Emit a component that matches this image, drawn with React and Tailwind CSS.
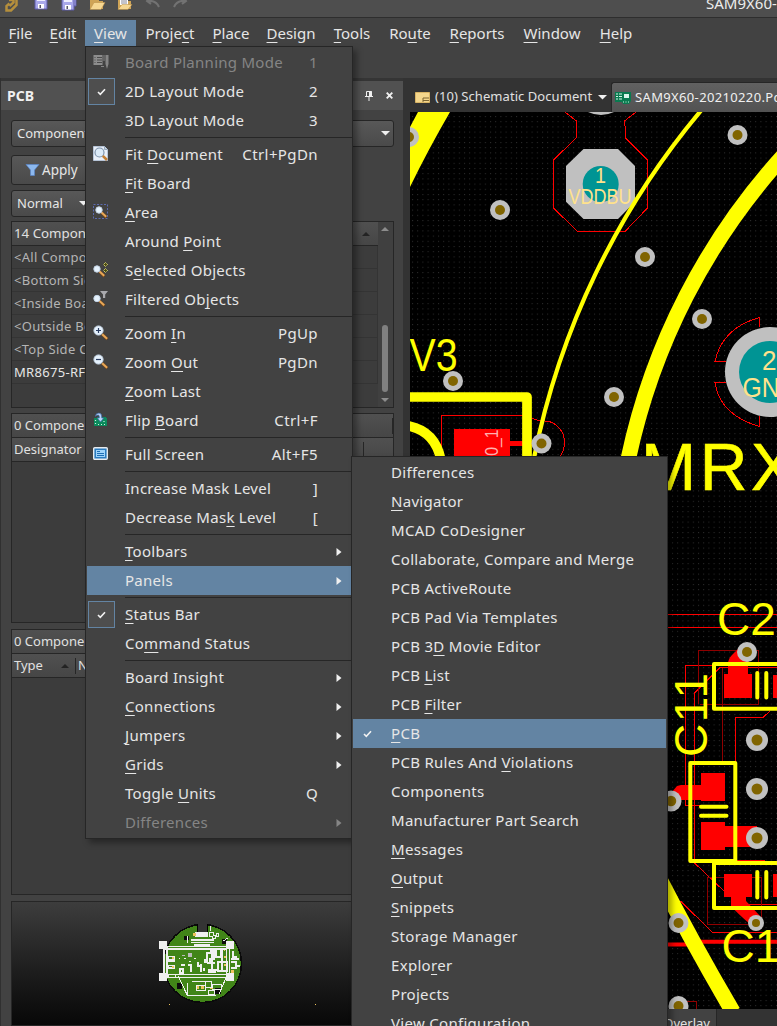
import React from 'react';

const FONT = "font-['Noto_Sans','Open_Sans',sans-serif]";

function Label({ text }) {
  const i = text.indexOf('&');
  if (i < 0) return <>{text}</>;
  return (
    <>
      {text.slice(0, i)}
      <span className="underline decoration-1 underline-offset-[3px] [text-decoration-skip-ink:none]">{text[i + 1]}</span>
      {text.slice(i + 2)}
    </>
  );
}

const menus = [
  ['&File', 'w-[41px]'], ['&Edit', 'w-[44px]'], ['&View', 'w-[51px]'], ['Proje&ct', 'w-[68px]'],
  ['&Place', 'w-[54px]'], ['&Design', 'w-[66px]'], ['&Tools', 'w-[56px]'], ['Ro&ute', 'w-[60px]'],
  ['&Reports', 'w-[74px]'], ['&Window', 'w-[76px]'], ['&Help', 'w-[52px]'],
];

const viewItems = [
  { t: 'Board Planning Mode', k: '1', icon: 'plan', off: true },
  { t: '2D Layout Mode', k: '2', check: true },
  { t: '3D Layout Mode', k: '3' },
  null,
  { t: 'Fit &Document', k: 'Ctrl+PgDn', icon: 'fitdoc' },
  { t: '&Fit Board' },
  { t: '&Area', icon: 'area' },
  { t: 'Around &Point' },
  { t: 'S&elected Objects', icon: 'selected' },
  { t: 'Filtered Ob&jects', icon: 'filtered' },
  null,
  { t: 'Zoom &In', k: 'PgUp', icon: 'in' },
  { t: 'Zoom &Out', k: 'PgDn', icon: 'out' },
  { t: '&Zoom Last' },
  { t: 'Flip &Board', k: 'Ctrl+F', icon: 'flip' },
  null,
  { t: 'Full Screen', k: 'Alt+F5', icon: 'full' },
  null,
  { t: 'Increase Mask Level', k: ']' },
  { t: 'Decrease Mas&k Level', k: '[' },
  null,
  { t: '&Toolbars', sub: true },
  { t: 'Panels', sub: true, hot: true },
  null,
  { t: '&Status Bar', check: true },
  { t: 'Co&mmand Status' },
  null,
  { t: 'Board Insight', sub: true },
  { t: '&Connections', sub: true },
  { t: '&Jumpers', sub: true },
  { t: '&Grids', sub: true },
  { t: 'Toggle &Units', k: 'Q' },
  { t: 'Differences', sub: true, off: true },
];

const panelItems = [
  'Differences', '&Navigator', 'MCAD CoDesigner', 'Collaborate, Compare and Merge', 'PCB ActiveRoute',
  'PCB Pad Via Templates', 'PCB 3&D Movie Editor', 'PCB &List', 'PCB &Filter', '&PCB',
  'PCB Rules And &Violations', 'Components', 'Manufacturer Part Search', '&Messages', '&Output',
  '&Snippets', 'Storage Manager', 'Explo&rer', 'Projects', 'View Configuration',
];

function Check() {
  return (
    <svg width="9" height="8" viewBox="0 0 9 8" fill="none" stroke="#f2f2f2" strokeWidth="1.6">
      <path d="M1 4 L3.3 6.3 L8 1.2" />
    </svg>
  );
}

function Lens({ x = 6, y = 6, r = 3.8, sign }) {
  return (
    <>
      <path d={`M${x + r * 0.8} ${y + r * 0.8} L${x + r + 4.2} ${y + r + 4.2}`} stroke="#7a4a1a" strokeWidth="3" />
      <path d={`M${x + r * 0.8} ${y + r * 0.8} L${x + r + 4} ${y + r + 3.6}`} stroke="#e8a95a" strokeWidth="1.9" />
      <circle cx={x} cy={y} r={r} fill="#e6f2fd" stroke="#c3d3e4" strokeWidth="1" />
      {sign && <path d={sign === '+' ? `M${x - 2.5} ${y}h5M${x} ${y - 2.5}v5` : `M${x - 2.5} ${y}h5`} stroke="#2c3f63" strokeWidth="1.2" />}
    </>
  );
}

function MenuIcon({ name }) {
  const p = {
    plan: (
      <>
        <rect x="0.5" y="1" width="9" height="10" fill="#8d8d8d" />
        <path d="M1.5 3.5h1M4 3.5h5M1.5 6h1M4 6h5M1.5 8.5h1M4 8.5h5" stroke="#4a4a4a" />
        <path d="M10.5 1h1v6h-1zM12.5 1h3v9l-1.5 5l-1.500-5zM8 12h3v1h-3z" fill="#858585" />
      </>
    ),
    fitdoc: (
      <>
        <path d="M0.500 0.500h11l3 3v11h-14z" fill="#e9f0f9" stroke="#b7c5d8" />
        <path d="M11.500 0.500v3h3" fill="#bfd0e6" stroke="#9ab" />
        <circle cx="6.500" cy="6.500" r="4.500" fill="#dcebf8" stroke="#7f93ab" strokeWidth="1.200" />
        <path d="M9.800 9.800L14 14" stroke="#c27f35" strokeWidth="2.600" />
      </>
    ),
    area: (
      <>
        <rect x="0.5" y="0.500" width="14" height="14" fill="none" stroke="#5c6bb0" strokeDasharray="2 1.5" />
        <Lens x={6} y={6} r={3.2} />
      </>
    ),
    selected: (
      <>
        <Lens x={4} y={7} r={3.2} />
        <path d="M12.500 0.500l2 2l-2 2l-2-2zM12.500 6.500l2 2l-2 2l-2-2z" fill="#4a4a10" stroke="#e6e27a" strokeDasharray="1.5 0.7" />
      </>
    ),
    filtered: (
      <>
        <Lens x={4} y={7.5} r={3.200} />
        <path d="M7 0h8l-2.800 3.500v3.500h-2.200v-3.500z" fill="#a9a9ad" />
      </>
    ),
    in: <Lens x={5.5} y={5.5} r={4.6} sign="+" />,
    out: <Lens x={5.5} y={5.5} r={4.6} sign="-" />,
    flip: (
      <>
        <path d="M1 6h3v-1h9v1h1v8h-13z" fill="#0b8a5c" />
        <path d="M2.500 8v1M2.500 11v1M5 12.500h1M8 12.500h1M11 9v1M11 12.500h1" stroke="#c9f5df" strokeWidth="1.2" />
        <path d="M2.500 4.500q0-3.500 3.500-3.500q2.800 0 2.800 4v1h2.200l-3.500 4l-3.500-4h2.200v-1.500q0-1.500-1.200-1.500q-1.500 0-2.500 1.500z" fill="#b9d3f5" stroke="#35609c" strokeWidth="0.7" />
      </>
    ),
    full: (
      <>
        <rect x="0.700" y="1.700" width="13.600" height="11.600" rx="1" fill="#2b7cc0" stroke="#e6eaee" strokeWidth="1.4" />
        <rect x="3" y="4" width="9" height="7" fill="#9fd4fb" />
        <path d="M4 5.500h3M4 7.500h7M4 9.500h7" stroke="#1e6fb5" />
      </>
    ),
  }[name];
  return <svg width="16" height="16" viewBox="0 0 16 16" fill="none">{p}</svg>;
}

function ViewMenu() {
  return (
    <div className="absolute left-[85px] top-[46px] w-[268px] h-[793px] bg-[#424242] border border-[#262626] pt-px pl-px shadow-[4px_4px_6px_rgba(0,0,0,0.35)] text-[15px] tracking-[0.27px]">
      {viewItems.map((m, i) =>
        m === null ? (
          <div key={i} className="h-[5px] pl-[38px] pt-[2px]"><div className="h-px bg-[#262626]" /></div>
        ) : (
          <div key={i} className={`h-[29px] w-[264px] flex items-center ${m.hot ? 'bg-[#6384a3]' : ''} ${m.off ? 'text-[#858585]' : 'text-[#e6e6e6]'}`}>
            <div className="w-[38px] shrink-0 flex">
              {m.check && (
                <div className="ml-px w-[27px] h-[27px] border border-[#6384a3] bg-[#4e4e4e] flex items-center justify-center"><Check /></div>
              )}
              {m.icon && <div className="ml-[6px] mb-px"><MenuIcon name={m.icon} /></div>}
            </div>
            <div className="grow whitespace-pre"><Label text={m.t} /></div>
            {m.k && <div className="mr-[33px] tracking-[0.4px]">{m.k}</div>}
            {m.sub && (
              <svg className="mr-[9px]" width="6" height="8" viewBox="0 0 6 8"><path d="M0.500 0L5.500 4L0.500 8z" fill={m.off ? '#858585' : '#f0f0f0'} /></svg>
            )}
          </div>
        )
      )}
    </div>
  );
}

function PanelsMenu() {
  return (
    <div className="absolute left-[351px] top-[456px] w-[317px] h-[580px] bg-[#424242] border border-[#262626] pt-px pl-px shadow-[4px_4px_6px_rgba(0,0,0,0.35)] text-[15px] tracking-[0.3px] text-[#e6e6e6]">
      {panelItems.map((t) => (
        <div key={t} className={`h-[29px] w-[313px] flex items-center ${t === '&PCB' ? 'bg-[#6384a3]' : ''}`}>
          <div className="w-[38px] shrink-0 pl-[10px]">{t === '&PCB' && <Check />}</div>
          <div className="whitespace-pre"><Label text={t} /></div>
        </div>
      ))}
    </div>
  );
}

function TopIcons() {
  return (
    <svg className="shrink-0" width="200" height="17" viewBox="0 0 200 17" fill="none">
      <path d="M16.500 0v5L11 10.500H6.500V6l3-2.500M9 0h4.500v2.500l-4 3.500" stroke="#b58f3c" strokeWidth="2.500" />
      <path d="M35 -4h12v13h-12z" fill="#a9a8ea" stroke="#5c5ba8" />
      <path d="M37 -3h8v4h-8z" fill="#eef" /><path d="M38 4h6v4.500h-6z" fill="#fff" /><path d="M39.500 5h1.500v3h-1.500z" fill="#556" />
      <path d="M66 -4h10v10h-10z" fill="#a9a8ea" stroke="#5c5ba8" />
      <path d="M62 -1h12v11h-12z" fill="#a9a8ea" stroke="#5c5ba8" />
      <path d="M64 -1h8v3h-8z" fill="#eef" /><path d="M65 5h6v4.500h-6z" fill="#fff" /><path d="M66.500 6h1.500v3h-1.500z" fill="#556" />
      <path d="M90 9V-2h9v3h4v8z" fill="#cfa457" /><path d="M90 9.500l4-7h11l-4 7z" fill="#f6d792" stroke="#b78b42" strokeWidth="0.500" />
      <path d="M118 9V-2h9v3h4v8z" fill="#cfa457" /><path d="M120-1h8v6h-8z" fill="#fff" /><path d="M121 1h6M121 3h6" stroke="#889" />
      <path d="M118 9.500l4-5h10l-4 5z" fill="#f6d792" stroke="#b78b42" strokeWidth="0.500" />
      <path d="M148 1q8-1 11 6M150-3l-3 4l4 3" stroke="#727272" strokeWidth="2" />
      <path d="M185 1q-8-1-11 6M183-3l3 4l-4 3" stroke="#727272" strokeWidth="2" />
    </svg>
  );
}

const Down = () => <svg width="9" height="5" viewBox="0 0 9 5"><path d="M0 0H9L4.500 4.500z" fill="#f0f0f0" /></svg>;
const Up = ({ c }) => <svg width="8" height="4" viewBox="0 0 8 4"><path d="M0 4H8L4 0z" fill={c} /></svg>;

const btn = 'border border-[#262626] rounded-[3px] bg-gradient-to-b from-[#585858] to-[#4a4a4a] flex items-center text-[#e6e6e6]';
const head = 'h-[24px] shrink-0 border-b border-[#262626] bg-gradient-to-b from-[#505050] to-[#464646] flex items-center text-[#e0e0e0]';

const rows = ['<All Components>', '<Bottom Side Components>', '<Inside Board Components>', '<Outside Board Components>', '<Top Side Components>', 'MR8675-RFM'];

function Thumb() {
  const W = '#f0f0f0';
  return (
    <svg width="380" height="123" viewBox="12 902 380 123" shapeRendering="crispEdges" fill="none">
      <circle cx="202.500" cy="963.500" r="39" fill="#418518" stroke="#0a0a0a" strokeWidth="1.500" />
      <path d="M197.500 920V931.500H207.500V920z" fill="#343434" /><path d="M197.500 924V932H207.500V924" stroke="#000" />
      <path d="M184 936h5v4h-5zM222 939h5v5h-5zM177 983h5v6h-5zM215 988h6v6h-6zM163 958h2v12h-2z" fill="#0c0c0c" />
      <path d="M165 946.500H230M165 949H226M165 974.500H230M165 977.500H226M164 946V977M167 946V977M226.500 946V977M229.500 946V977" stroke={W} strokeWidth="1.200" />
      <path d="M191 940h23M191 942.500h23M194 945h16M187.500 936v7M210.500 926v5" stroke={W} strokeWidth="1.500" />
      <path d="M195 932h13v5h-13zM168 960h7v2h-7zM168 967h7v2h-7z" fill={W} />
      <path d="M209 932h4v3h3v-2h2v3h-3v2h-3v-2h-3zM223 941l5-3" stroke={W} />
      <path d="M178 976L187.500 995.500H216M187.500 983v12M192 981.500h15M219 994L226 978M205 981h6v6h-6zM212 984h9v5h-9zM208 990h6v4h-6z" stroke={W} />
      <path d="M196 985h9v5h-9z" stroke={W} />
      <path d="M207 963V953h4v-3h3v9h-4v5M216 949v8h5v-7M207 963h8M218 971v-9h9v9zM222 950v20M208 970h11M208 972h8M181 965h4M188 965h3v7M180 969v4h3v-4zM198 962v4h3v6M205 959v4M233 951v6h4M231 959h8M231 962h5v4h4M231 968h6M212 950v20" stroke={W} strokeWidth="1.200" />
      <path d="M168 956h6v3h-6zM168 965h6v3h-6zM168 974h7v3h-7z" stroke={W} />
      <path d="M188 953h4v4h-4zM182 955h3v1h-3z" fill="#bcbcbc" />
      <path d="M193 933h3v3h-3zM172 957h2v2h-2zM172 966h2v2h-2zM231 970h3v3h-3zM197 986h2v3h-2zM201 986h3v3h-3zM224 950h1v1h-1zM224 956h2v2h-2zM224 964h2v2h-2zM210 988h3v1h-3zM169 1004h1v1h-1zM315 1004h1v1h-1z" fill="#eec45c" />
      <path d="M179 958h1v1h-1zM184 958h2v1h-2zM189 961h2v1h-2zM194 958h2v1h-2zM200 964h2v2h-2zM203 968h2v3h-2zM211 965h2v2h-2z" fill={W} />
      <path d="M159 941h8v8h-8zM226 941h8v8h-8zM159 973h8v8h-8zM226 973h8v8h-8z" fill={W} />
    </svg>
  );
}

function LeftPanel() {
  return (
    <div className="w-[403px] shrink-0 border-l border-[#303030] bg-[#424242] flex flex-col text-[13px]">
      <div className="h-[3px] bg-[#353535] shrink-0" />
      <div className="h-[29px] shrink-0 bg-[#515151] flex items-center pl-[6px] pr-[10px] text-[#f0f0f0]">
        <span className="font-bold text-[14px] grow">PCB</span>
        <svg className="mr-[13px]" width="8" height="10" viewBox="0 0 8 10"><path d="M1.500 0.500h5v5h-5z" fill="none" stroke="#f0f0f0" /><path d="M4 0h2.500v5H4zM0 5h8v1H0zM3.500 6h1v4h-1z" fill="#f0f0f0" /></svg>
        <svg width="7" height="7" viewBox="0 0 7 7"><path d="M0.700 0.700l5.600 5.600M6.300 0.700l-5.600 5.600" stroke="#f0f0f0" strokeWidth="1.900" /></svg>
      </div>
      <div className="pl-[10px] pr-[9px] pt-[10px] flex flex-col grow">
        <div className={`${btn} h-[27px] shrink-0 pl-[5px] pr-[3px]`}><span className="grow">Components</span><Down /></div>
        <div className={`${btn} h-[30px] shrink-0 mt-[8px] w-[110px] pl-[13px]`}>
          <svg width="15" height="12" viewBox="0 0 15 12"><path d="M1 0.500h13l-4.500 5.500v5.500h-4v-5.500z" fill="#8cb8ee" stroke="#5a86c8" strokeWidth="0.700" /></svg>
          <span className="ml-[2px] text-[13.500px]">Apply</span>
        </div>
        <div className={`${btn} h-[27px] shrink-0 mt-[5px] mb-px w-[84px] pl-[5px] pr-[6px]`}><span className="grow">Normal</span><Down /></div>
        <div className="mt-[3px] h-[187px] shrink-0 border border-[#262626] bg-[#3c3c3c] flex">
          <div className="grow flex flex-col overflow-hidden">
            <div className={`${head} pl-[2px] pt-px justify-between pr-[8px]`}><span className="text-[13.300px]">14 Components</span><Up c="#232323" /></div>
            {rows.map((r, i) => (
              <div key={r} className={`h-[23px] shrink-0 border-b border-r border-[#343434] pl-[2px] pt-px flex items-center whitespace-pre tracking-[0.3px] ${i === 5 ? 'text-[#e6e6e6]' : 'text-[#b4b4b4]'}`}>{r}</div>
            ))}
          </div>
          <div className="w-[15px] pr-px shrink-0 bg-[#404040] flex flex-col items-center justify-between py-[5px]">
            <Up c="#8c8c8c" />
            <div className="mt-auto mb-[6px] w-[6px] h-[67px] rounded-full bg-[#808080]" />
            <svg width="8" height="4" viewBox="0 0 8 4"><path d="M0 0H8L4 4z" fill="#8c8c8c" /></svg>
          </div>
        </div>
        <div className="mt-[5px] h-[210px] shrink-0 border border-[#262626] bg-[#3c3c3c]">
          <div className={`${head} pl-[2px] pt-px justify-between`}><span>0 Components</span><span className="w-px h-[16px] bg-[#262626]" /></div>
          <div className={`${head} pl-[2px] pr-[29px] pt-px justify-between`}><span>Designator</span><span className="w-px h-[16px] bg-[#262626]" /></div>
        </div>
        <div className="mt-[6px] h-[266px] shrink-0 border border-[#262626] bg-[#3c3c3c]">
          <div className={`${head} pl-[2px] pt-px`}>0 Components</div>
          <div className={`${head} pl-[2px] pt-px`}>
            <span className="w-[47px]">Type</span><Up c="#232323" /><span className="ml-[6px] mr-[2px] w-px h-[16px] bg-[#262626]" /><span>Name</span>
          </div>
        </div>
        <div className="mt-[6px] h-[125px] shrink-0 border border-[#262626] bg-gradient-to-b from-[#3d3d3d] to-[#080808]"><Thumb /></div>
      </div>
    </div>
  );
}

const vias = [
  [409, 137, 10], [500, 210, 10], [737.500, 135, 10], [645, 257, 10], [702, 319, 10], [453, 381, 10], [614, 397, 10],
  [541.500, 443.500, 10], [747, 652, 10], [757, 740, 11], [757, 789, 11], [757, 838, 11], [671, 801, 10.500],
  [678.500, 923, 10], [756, 923, 8], [678.500, 1006, 10],
];

function Board() {
  const Y = '#ffff00';
  return (
    <svg className="block shrink-0" width="367" height="897" viewBox="410 112 367 897" fill="none" fontFamily="'Liberation Sans', Arial, sans-serif">
      <defs>
        <pattern id="dots" x="412" y="116" width="5.200" height="5.200" patternUnits="userSpaceOnUse"><rect width="1" height="1" fill="#303030" /></pattern>
      </defs>
      <rect x="410" y="112" width="367" height="897" fill="#000" />
      <rect x="410" y="112" width="367" height="897" fill="url(#dots)" />
      <path d="M418 112H450Q428 150 410 187V127z" fill={Y} />
      <g stroke="#f00" strokeWidth="1" shapeRendering="crispEdges">
        <path d="M565 112L576.500 121V137.500L553.500 160V208L577.500 231.500H625L647.500 208V160L625.500 138V130L624.500 121L636 112" />
        <path d="M441.500 458V415.500H523M532 418Q537 421 545 421C556 421 565 432 564.500 443Q564 452 560 456" />
        <path d="M759.500 327V317.500Q722 328 715 361.500M714 361.500H726M714 382.500H726M715 383Q720 415 759.500 426.500V416" />
        <path d="M667 614.500H777M667 627.500H777" />
        <path d="M712 665.500H685.500V805.500H701M720 667.500L694.500 693V863L725 892M735.500 815V717.500H763L770 711M720 667.500H777" />
        <path d="M678 901.500H681L712.500 932.500H777M748 904.500H777M730 860.500H765" />
        <path d="M707.500 924.500V877.500H761.500V924.500z" stroke="#900000" />
        <path d="M698.500 704V650.500H758.500V704.500z M722.500 668V763M685.500 1001.500H696.500V1009" stroke="#900000" />
      </g>
      <path d="M667 944.500H702M698 941.700H777" stroke="#f00" strokeWidth="4" />
      <path d="M588 112Q601 118 614 112z" fill="#c0c0c0" />
      <path d="M583.500 149H618L635 166V201.700L618 219H583.500L566 201.700V166z" fill="#c0c0c0" />
      <circle cx="600.700" cy="184" r="18" fill="#009494" />
      <circle cx="770" cy="372" r="45" fill="#c0c0c0" />
      <circle cx="770" cy="372" r="31" fill="#009494" />
      <g fill="#ffe28c">
        <text x="595" y="183" fontSize="22" textLength="11" lengthAdjust="spacingAndGlyphs">1</text>
        <text x="568.500" y="203.700" fontSize="22" textLength="63" lengthAdjust="spacingAndGlyphs">VDDBU</text>
        <text x="762" y="370" fontSize="28.500" textLength="14.500" lengthAdjust="spacingAndGlyphs">2</text>
        <text x="742.500" y="396.500" fontSize="27" textLength="55" lengthAdjust="spacingAndGlyphs">GND</text>
      </g>
      <path d="M701.500 110A776 776 0 0 0 534 458" stroke={Y} strokeWidth="4.200" />
      <path d="M785 154A653 653 0 0 0 628.500 458" stroke={Y} strokeWidth="15.500" />
      <path d="M655 870Q692 942 733 1012" stroke={Y} strokeWidth="15.500" />
      <g fill="#f00">
        <path d="M454 429h56v30h-56zM510 441h30v5h-30z" />
        <path d="M724 674h4v-10q0-5 4-9l8-8l10 12l-2 4v11h4v24h-28zM773 675h6v23h-6z" />
        <path d="M701 773h24v28h-24v-1h-24l-6-7l6-7l4-1h20zM701 822h24v4h32v21h-32v3h-24z" />
        <path d="M724 874h28v23h-6v4l14 15l-8 10q-17-15-21-20v-9h-7zM773 874h6v23h-6z" />
      </g>
      <text transform="translate(498 464.500) rotate(-90)" fontSize="18" fill="#ffb0b0" textLength="35" lengthAdjust="spacingAndGlyphs">20_1</text>
      <g stroke={Y} strokeLinejoin="round">
        <path d="M405 397H527V460M406 425.500Q435 430 441 460" strokeWidth="9.700" />
        <path d="M780 664H714V708.700H780M690.300 763H735.300V861H690.300zM780 863H714V908H780" strokeWidth="4" />
        <path d="M757.300 673V697.500M766.300 673V697.500M701 806.700H726.500M701 815.700H726.500M757.300 872V897.500M766.300 872V897.500" strokeWidth="4" strokeLinecap="round" />
      </g>
      <g fill={Y}>
        <text x="409.500" y="371" fontSize="46" textLength="48" lengthAdjust="spacingAndGlyphs">V3</text>
        <text x="641" y="490" fontSize="66" stroke={Y} strokeWidth="0.600" textLength="154">MRX</text>
        <text x="717" y="635" fontSize="46">C2</text>
        <text x="721.500" y="962" fontSize="46">C1</text>
        <text transform="translate(707 757) rotate(-90)" fontSize="46" textLength="84">C11</text>
      </g>
      {vias.map(([x, y, r]) => (
        <g key={`${x}-${y}`}><circle cx={x} cy={y} r={r} fill="#c0c0c0" /><circle cx={x} cy={y} r={r / 2} fill="#806400" /></g>
      ))}
    </svg>
  );
}

function Workspace() {
  return (
    <div className="grow bg-[#333333] pl-[7px] flex flex-col overflow-hidden">
      <div className="h-[34px] shrink-0 flex items-end text-[13px] text-[#e0e0e0] whitespace-pre">
        <div className="h-[30px] w-[201px] shrink-0 flex items-center pl-[5px] pr-[4px]">
          <svg width="15" height="11" viewBox="0 0 15 11"><path d="M0.500 0.500h14v10h-14z" fill="#f4d68c" stroke="#d9b465" /><path d="M8 6h6M8 8.500h6M8 6v4" stroke="#7c6531" /></svg>
          <span className="ml-[5px] grow tracking-[0.06px]">(10) Schematic Document</span>
          <Down />
        </div>
        <div className="h-[30px] w-[200px] shrink-0 rounded-tl-[3px] border-t border-l border-[#262626] bg-gradient-to-b from-[#616161] to-[#525252] flex items-center pl-[3px] text-[#f0f0f0]">
          <svg className="shrink-0" width="16" height="12" viewBox="0 0 16 12"><path d="M0 0h16v9l-2 3h-6l-1-2H0z" fill="#0a7a50" /><path d="M1 2h2M1 4.500h2M1 7h2M4 2h3M4 4.500h3M4 7h3M8 10h1M10.500 10h1M13 10h1" stroke="#d0f5e3" strokeWidth="1.200" /><path d="M9 2h5v4h-5z" fill="#d9f5ea" /></svg>
          <span className="ml-[4px] tracking-[0.35px]">SAM9X60-20210220.PcbDoc</span>
        </div>
      </div>
      <Board />
      <div className="h-[17px] shrink-0 flex text-[13px] text-[#e0e0e0]">
        <div className="w-[307px] h-[30px] bg-[#424242] border-r border-[#262626] flex justify-end pr-[6px] pt-[5px] whitespace-pre">Top Overlay</div>
      </div>
    </div>
  );
}

export default function App() {
  return (
    <div className={`relative w-[777px] h-[1026px] overflow-hidden flex flex-col bg-[#424242] ${FONT}`}>
      <div className="h-[18px] shrink-0 bg-[#4e4e4e] border-b border-[#2e2e2e] flex items-start">
        <TopIcons />
        <div className="ml-[506px] -mt-[8px] text-[15px] leading-[22px] text-[#ececec] whitespace-pre">SAM9X60-20210220</div>
      </div>
      <div className="h-[60px] shrink-0 flex pt-[2px] text-[15px] text-[#e6e6e6]">
        {menus.map(([t, w]) => (
          <div key={t} className={`${w} h-[26px] shrink-0 flex items-center justify-center ${t === '&View' ? 'bg-[#6384a3]' : ''}`}><span className="whitespace-pre"><Label text={t} /></span></div>
        ))}
      </div>
      <div className="grow flex overflow-hidden">
        <LeftPanel />
        <Workspace />
      </div>
      <ViewMenu />
      <PanelsMenu />
    </div>
  );
}
